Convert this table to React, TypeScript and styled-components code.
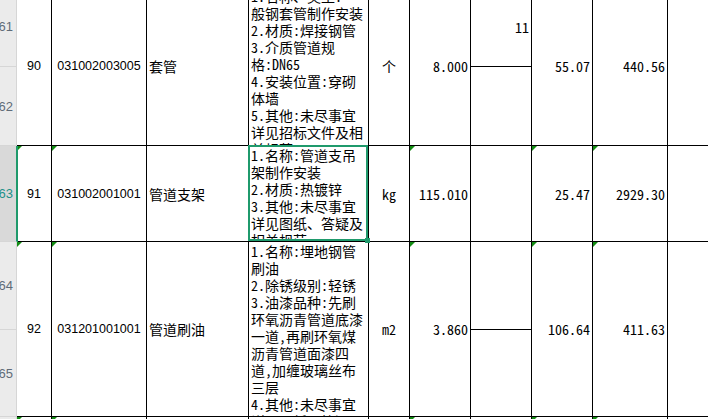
import React from 'react';
import styled, { createGlobalStyle, css } from 'styled-components';

const GlobalStyle = createGlobalStyle`
  html, body { margin: 0; padding: 0; background: #fff; overflow: hidden; }
  #root { width: 708px; height: 419px; overflow: hidden; }
`;

const MONO = `"Noto Sans Mono CJK SC", "Noto Sans CJK SC", "Liberation Mono", monospace`;
const SANS = `"Liberation Sans", Arial, sans-serif`;
const CJK = `"Noto Sans CJK SC", "Liberation Sans", sans-serif`;
const GREEN = '#1f9a6c';

const Viewport = styled.div`
  width: 708px;
  height: 419px;
  overflow: hidden;
  background: #fff;
`;

const Sheet = styled.div`
  display: grid;
  grid-template-columns: 17px 35px 95px 102px 120px 41px 61px 61px 61px 75px 140px;
  grid-template-rows: 80px 79px 96px 88px 87px 80px;
  margin-top: -13px;
  width: max-content;
`;

const RowHeader = styled.div<{ $active?: boolean }>`
  position: relative;
  z-index: 1;
  box-sizing: border-box;
  display: flex;
  align-items: center;
  justify-content: flex-end;
  overflow: hidden;
  padding-right: 3px;
  white-space: nowrap;
  background: ${(p) => (p.$active ? '#d9d9d9' : '#ebebeb')};
  border-right: 1px solid ${(p) => (p.$active ? GREEN : '#d6d6d6')};
  border-bottom: 1px solid #d6d6d6;
  box-shadow: ${(p) => (p.$active ? `1px 0 0 ${GREEN}` : 'none')};
  font: 13px ${SANS};
  color: ${(p) => (p.$active ? '#22918a' : '#5f6b78')};
`;

const Cell = styled.div<{ $span?: number; $flag?: boolean }>`
  grid-row: span ${(p) => p.$span ?? 1};
  position: relative;
  box-sizing: border-box;
  min-width: 0;
  min-height: 0;
  overflow: hidden;
  display: flex;
  align-items: center;
  white-space: nowrap;
  color: #000;
  border-right: 1px solid #000;
  border-bottom: 1px solid #000;
  ${(p) =>
    p.$flag &&
    css`
      &::before {
        content: '';
        position: absolute;
        top: 0;
        left: 0;
        width: 0;
        height: 0;
        border-top: 5px solid #128c12;
        border-right: 5px solid transparent;
      }
    `}
`;

const IndexCell = styled(Cell)`
  justify-content: center;
  font: 12.5px ${SANS};
`;

const CodeCell = styled(Cell)`
  justify-content: center;
  font: 12.5px ${SANS};
`;

const NameCell = styled(Cell)`
  justify-content: flex-start;
  padding-left: 2px;
  font: 14px ${CJK};
`;

const DescCell = styled(Cell)<{ $selected?: boolean }>`
  overflow: visible;
  align-items: stretch;
  ${(p) => p.$selected && css`z-index: 2;`}
`;

const DescText = styled.div`
  flex: 1;
  overflow: hidden;
  padding: 1px 0 0 2px;
  font: 14px ${MONO};
  line-height: 17px;
`;

const DescLine = styled.div`
  white-space: pre;
`;

const SelectionFrame = styled.div`
  position: absolute;
  top: -1px;
  left: -1px;
  right: 0;
  bottom: 0;
  border: 2px solid ${GREEN};
  pointer-events: none;
`;

const FillHandle = styled.div`
  position: absolute;
  right: -4px;
  bottom: -4px;
  width: 5px;
  height: 5px;
  background: ${GREEN};
`;

const UnitCell = styled(Cell)`
  justify-content: center;
  font: 14px ${MONO};
`;

const NumCell = styled(Cell)`
  justify-content: flex-end;
  padding-right: 2px;
  font: 14px ${MONO};
`;

const BlankCell = styled(Cell)``;

type Item = {
  headers: string[];
  activeHeader?: boolean;
  no: string;
  code: string;
  name: string;
  desc: string[];
  unit: string;
  qty: string;
  side: string[];
  price: string;
  total: string;
  selected?: boolean;
};

const items: Item[] = [
  {
    headers: ['161', '162'],
    no: '90',
    code: '031002003005',
    name: '套管',
    desc: [
      '1.名称、类型:一',
      '般钢套管制作安装',
      '2.材质:焊接钢管',
      '3.介质管道规',
      '格:DN65',
      '4.安装位置:穿砌',
      '体墙',
      '5.其他:未尽事宜',
      '详见招标文件及相',
      '关规范',
    ],
    unit: '个',
    qty: '8.000',
    side: ['11', ''],
    price: '55.07',
    total: '440.56',
  },
  {
    headers: ['163'],
    activeHeader: true,
    no: '91',
    code: '031002001001',
    name: '管道支架',
    desc: [
      '1.名称:管道支吊',
      '架制作安装',
      '2.材质:热镀锌',
      '3.其他:未尽事宜',
      '详见图纸、答疑及',
      '相关规范',
    ],
    unit: 'kg',
    qty: '115.010',
    side: [''],
    price: '25.47',
    total: '2929.30',
    selected: true,
  },
  {
    headers: ['164', '165'],
    no: '92',
    code: '031201001001',
    name: '管道刷油',
    desc: [
      '1.名称:埋地钢管',
      '刷油',
      '2.除锈级别:轻锈',
      '3.油漆品种:先刷',
      '环氧沥青管道底漆',
      '一道,再刷环氧煤',
      '沥青管道面漆四',
      '道,加缠玻璃丝布',
      '三层',
      '4.其他:未尽事宜',
      '详见图纸、答疑及',
      '相关规范',
    ],
    unit: 'm2',
    qty: '3.860',
    side: ['', ''],
    price: '106.64',
    total: '411.63',
  },
  {
    headers: ['166'],
    no: '93',
    code: '031201001002',
    name: '',
    desc: [],
    unit: '',
    qty: '',
    side: [''],
    price: '',
    total: '',
  },
];

export default function App() {
  return (
    <Viewport>
      <GlobalStyle />
      <Sheet>
        {items.map((it) => {
          const span = it.headers.length;
          return (
            <React.Fragment key={it.no}>
              <RowHeader $active={it.activeHeader}>{it.headers[0]}</RowHeader>
              <IndexCell $span={span} $flag>{it.desc.length ? it.no : ''}</IndexCell>
              <CodeCell $span={span} $flag>{it.desc.length ? it.code : ''}</CodeCell>
              <NameCell $span={span}>{it.name}</NameCell>
              <DescCell $span={span} $selected={it.selected}>
                <DescText>
                  {it.desc.map((l, i) => (
                    <DescLine key={i}>{l}</DescLine>
                  ))}
                </DescText>
                {it.selected && (
                  <SelectionFrame>
                    <FillHandle />
                  </SelectionFrame>
                )}
              </DescCell>
              <UnitCell $span={span}>{it.unit}</UnitCell>
              <NumCell $span={span} $flag>{it.qty}</NumCell>
              <NumCell>{it.side[0]}</NumCell>
              <NumCell $span={span} $flag>{it.price}</NumCell>
              <NumCell $span={span} $flag>{it.total}</NumCell>
              <BlankCell $span={span} />
              {span > 1 && (
                <>
                  <RowHeader>{it.headers[1]}</RowHeader>
                  <NumCell>{it.side[1]}</NumCell>
                </>
              )}
            </React.Fragment>
          );
        })}
      </Sheet>
    </Viewport>
  );
}
